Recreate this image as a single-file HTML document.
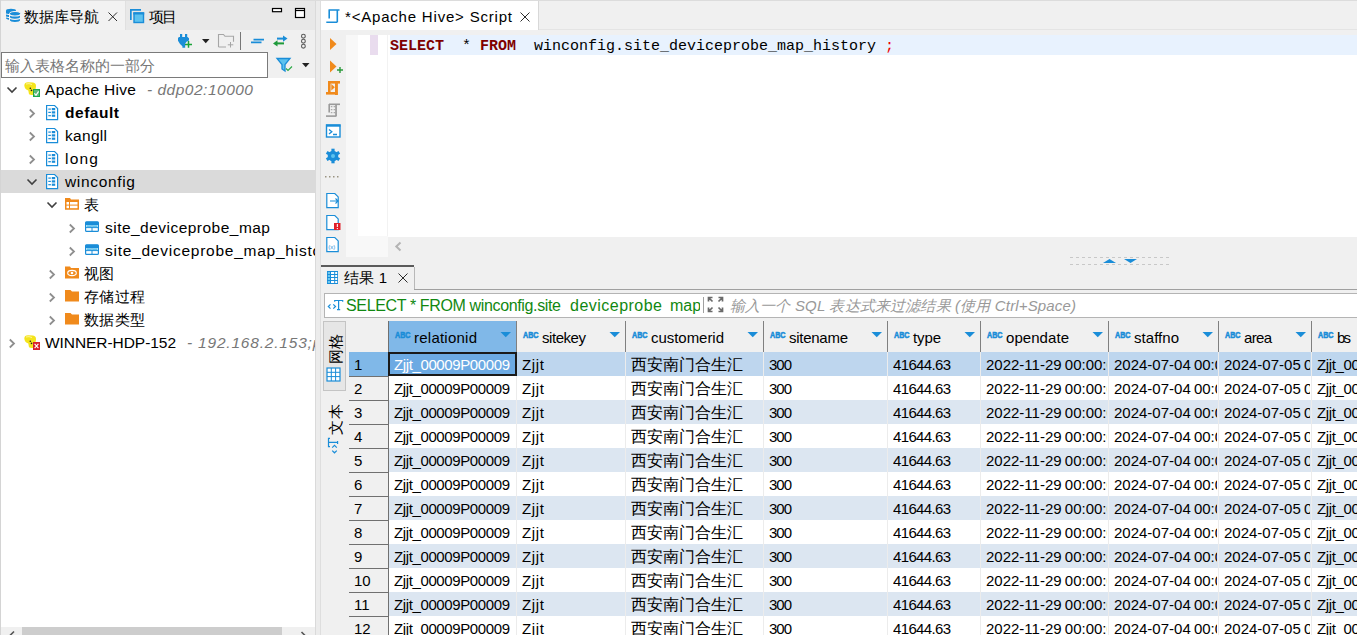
<!DOCTYPE html>
<html><head><meta charset="utf-8"><style>
html,body{margin:0;padding:0;}
body{width:1357px;height:635px;position:relative;overflow:hidden;background:#f0f0f0;font-family:'Liberation Sans', sans-serif;}
</style></head><body>
<div style="position:absolute;left:0px;top:0px;width:1357px;height:1px;background:#dcdcdc;"></div>
<div style="position:absolute;left:0px;top:0px;width:1px;height:635px;background:#d4d4d4;"></div>
<div style="position:absolute;left:1px;top:1px;width:315px;height:29px;background:#e8e8e8;"></div>
<div style="position:absolute;left:1px;top:1px;width:124px;height:29px;background:#f2f2f2;"></div>
<div style="position:absolute;left:125px;top:1px;width:1px;height:29px;background:#e0e0e0;"></div>
<div style="position:absolute;left:1px;top:30px;width:314px;height:48px;background:#f0f0f0;"></div>
<div style="position:absolute;left:315px;top:1px;width:1px;height:634px;background:#dadada;"></div>
<div style="position:absolute;left:316px;top:1px;width:4px;height:634px;background:#ececec;"></div>
<div style="position:absolute;left:320px;top:1px;width:1px;height:634px;background:#dedede;"></div>
<div style="position:absolute;left:1px;top:78px;width:314px;height:549px;background:#ffffff;"></div>
<div style="position:absolute;left:1px;top:627px;width:314px;height:8px;background:#f0f0f0;"></div>
<div style="position:absolute;left:22px;top:627px;width:260px;height:8px;background:#cdcdcd;"></div>
<div style="position:absolute;left:1px;top:52px;width:267px;height:26px;background:#ffffff;border:1px solid #7a7a7a;box-sizing:border-box;"></div>
<div style="position:absolute;left:1px;top:170px;width:314px;height:23px;background:#dadada;"></div>
<div style="position:absolute;left:321px;top:1px;width:1036px;height:29px;background:#f0f0f0;"></div>
<div style="position:absolute;left:321px;top:29px;width:1036px;height:1px;background:#e4e4e4;"></div>
<div style="position:absolute;left:321px;top:1px;width:217px;height:29px;background:#ffffff;"></div>
<div style="position:absolute;left:538px;top:1px;width:1px;height:29px;background:#d8d8d8;"></div>
<div style="position:absolute;left:321px;top:30px;width:1036px;height:5px;background:#f0f0f0;"></div>
<div style="position:absolute;left:321px;top:35px;width:25px;height:222px;background:#f0f0f0;"></div>
<div style="position:absolute;left:346px;top:35px;width:12px;height:222px;background:#f8f8f8;"></div>
<div style="position:absolute;left:358px;top:35px;width:30px;height:201px;background:#ffffff;"></div>
<div style="position:absolute;left:358px;top:236px;width:30px;height:21px;background:#f8f8f8;"></div>
<div style="position:absolute;left:387px;top:35px;width:1px;height:201px;background:#f2f2f2;"></div>
<div style="position:absolute;left:388px;top:35px;width:969px;height:202px;background:#ffffff;"></div>
<div style="position:absolute;left:388px;top:237px;width:969px;height:20px;background:#f0f0f0;"></div>
<div style="position:absolute;left:370px;top:35px;width:8px;height:20px;background:#e9dcee;"></div>
<div style="position:absolute;left:390px;top:35px;width:967px;height:20px;background:#e8f2fe;"></div>
<div style="position:absolute;left:321px;top:257px;width:1036px;height:8px;background:#f0f0f0;"></div>
<div style="position:absolute;left:321px;top:265px;width:1036px;height:370px;background:#f0f0f0;"></div>
<div style="position:absolute;left:321px;top:265px;width:93px;height:2px;background:#5a5a5a;"></div>
<div style="position:absolute;left:414px;top:267px;width:1px;height:23px;background:#b8b8b8;"></div>
<div style="position:absolute;left:414px;top:289px;width:943px;height:1px;background:#a0a0a0;"></div>
<div style="position:absolute;left:324px;top:293px;width:1033px;height:25px;background:#ffffff;border:1px solid #b4b4b4;border-right:none;box-sizing:border-box;"></div>
<div style="position:absolute;left:700px;top:294px;width:30px;height:23px;background:#ffffff;"></div>
<div style="position:absolute;left:703px;top:297px;width:1px;height:16px;background:#a0a0a0;"></div>
<div style="position:absolute;left:323px;top:321px;width:23px;height:70px;background:#e6e6e6;border:1px solid #c4c4c4;box-sizing:border-box;"></div>
<div style="position:absolute;left:349px;top:321px;width:39px;height:31px;background:#f0f0f0;"></div>
<div style="position:absolute;left:388px;top:321px;width:969px;height:31px;background:#f0f0f0;"></div>
<div style="position:absolute;left:388px;top:321px;width:128px;height:31px;background:#80b8e8;"></div>
<div style="position:absolute;left:349px;top:352px;width:1008px;height:1px;background:#5a5a5a;"></div>
<div style="position:absolute;left:388px;top:352px;width:969px;height:24px;background:#bed6ee;"></div>
<div style="position:absolute;left:349px;top:352px;width:39px;height:24px;background:#80b8e8;"></div>
<div style="position:absolute;left:388px;top:376px;width:969px;height:24px;background:#ffffff;"></div>
<div style="position:absolute;left:349px;top:376px;width:39px;height:24px;background:#f0f0f0;"></div>
<div style="position:absolute;left:349px;top:376px;width:39px;height:1px;background:#707070;"></div>
<div style="position:absolute;left:388px;top:400px;width:969px;height:24px;background:#dce6f1;"></div>
<div style="position:absolute;left:349px;top:400px;width:39px;height:24px;background:#f0f0f0;"></div>
<div style="position:absolute;left:349px;top:400px;width:39px;height:1px;background:#707070;"></div>
<div style="position:absolute;left:388px;top:424px;width:969px;height:24px;background:#ffffff;"></div>
<div style="position:absolute;left:349px;top:424px;width:39px;height:24px;background:#f0f0f0;"></div>
<div style="position:absolute;left:349px;top:424px;width:39px;height:1px;background:#707070;"></div>
<div style="position:absolute;left:388px;top:448px;width:969px;height:24px;background:#dce6f1;"></div>
<div style="position:absolute;left:349px;top:448px;width:39px;height:24px;background:#f0f0f0;"></div>
<div style="position:absolute;left:349px;top:448px;width:39px;height:1px;background:#707070;"></div>
<div style="position:absolute;left:388px;top:472px;width:969px;height:24px;background:#ffffff;"></div>
<div style="position:absolute;left:349px;top:472px;width:39px;height:24px;background:#f0f0f0;"></div>
<div style="position:absolute;left:349px;top:472px;width:39px;height:1px;background:#707070;"></div>
<div style="position:absolute;left:388px;top:496px;width:969px;height:24px;background:#dce6f1;"></div>
<div style="position:absolute;left:349px;top:496px;width:39px;height:24px;background:#f0f0f0;"></div>
<div style="position:absolute;left:349px;top:496px;width:39px;height:1px;background:#707070;"></div>
<div style="position:absolute;left:388px;top:520px;width:969px;height:24px;background:#ffffff;"></div>
<div style="position:absolute;left:349px;top:520px;width:39px;height:24px;background:#f0f0f0;"></div>
<div style="position:absolute;left:349px;top:520px;width:39px;height:1px;background:#707070;"></div>
<div style="position:absolute;left:388px;top:544px;width:969px;height:24px;background:#dce6f1;"></div>
<div style="position:absolute;left:349px;top:544px;width:39px;height:24px;background:#f0f0f0;"></div>
<div style="position:absolute;left:349px;top:544px;width:39px;height:1px;background:#707070;"></div>
<div style="position:absolute;left:388px;top:568px;width:969px;height:24px;background:#ffffff;"></div>
<div style="position:absolute;left:349px;top:568px;width:39px;height:24px;background:#f0f0f0;"></div>
<div style="position:absolute;left:349px;top:568px;width:39px;height:1px;background:#707070;"></div>
<div style="position:absolute;left:388px;top:592px;width:969px;height:24px;background:#dce6f1;"></div>
<div style="position:absolute;left:349px;top:592px;width:39px;height:24px;background:#f0f0f0;"></div>
<div style="position:absolute;left:349px;top:592px;width:39px;height:1px;background:#707070;"></div>
<div style="position:absolute;left:388px;top:616px;width:969px;height:24px;background:#ffffff;"></div>
<div style="position:absolute;left:349px;top:616px;width:39px;height:24px;background:#f0f0f0;"></div>
<div style="position:absolute;left:349px;top:616px;width:39px;height:1px;background:#707070;"></div>
<div style="position:absolute;left:388px;top:321px;width:1px;height:31px;background:#808080;"></div>
<div style="position:absolute;left:388px;top:352px;width:1px;height:283px;background:#ececec;"></div>
<div style="position:absolute;left:516px;top:321px;width:1px;height:31px;background:#808080;"></div>
<div style="position:absolute;left:516px;top:352px;width:1px;height:283px;background:#ececec;"></div>
<div style="position:absolute;left:625px;top:321px;width:1px;height:31px;background:#808080;"></div>
<div style="position:absolute;left:625px;top:352px;width:1px;height:283px;background:#ececec;"></div>
<div style="position:absolute;left:763px;top:321px;width:1px;height:31px;background:#808080;"></div>
<div style="position:absolute;left:763px;top:352px;width:1px;height:283px;background:#ececec;"></div>
<div style="position:absolute;left:887px;top:321px;width:1px;height:31px;background:#808080;"></div>
<div style="position:absolute;left:887px;top:352px;width:1px;height:283px;background:#ececec;"></div>
<div style="position:absolute;left:980px;top:321px;width:1px;height:31px;background:#808080;"></div>
<div style="position:absolute;left:980px;top:352px;width:1px;height:283px;background:#ececec;"></div>
<div style="position:absolute;left:1108px;top:321px;width:1px;height:31px;background:#808080;"></div>
<div style="position:absolute;left:1108px;top:352px;width:1px;height:283px;background:#ececec;"></div>
<div style="position:absolute;left:1218px;top:321px;width:1px;height:31px;background:#808080;"></div>
<div style="position:absolute;left:1218px;top:352px;width:1px;height:283px;background:#ececec;"></div>
<div style="position:absolute;left:1311px;top:321px;width:1px;height:31px;background:#808080;"></div>
<div style="position:absolute;left:1311px;top:352px;width:1px;height:283px;background:#ececec;"></div>
<div style="position:absolute;left:388px;top:321px;width:1px;height:314px;background:#707070;"></div>
<div style="position:absolute;left:388px;top:352px;width:129px;height:24px;background:#6caae3;border:2px solid #1a1a1a;box-sizing:border-box;"></div>
<div style="position:absolute;left:24px;top:2px;height:29px;line-height:29px;font-family:'Liberation Sans', sans-serif;font-size:15px;color:#000;font-weight:normal;font-style:normal;white-space:pre;letter-spacing:0.000px;">数据库导航</div>
<div style="position:absolute;left:149px;top:2px;height:29px;line-height:29px;font-family:'Liberation Sans', sans-serif;font-size:15px;color:#000;font-weight:normal;font-style:normal;white-space:pre;letter-spacing:-2.000px;">项目</div>
<div style="position:absolute;left:5px;top:53px;height:26px;line-height:26px;font-family:'Liberation Sans', sans-serif;font-size:15px;color:#777;font-weight:normal;font-style:normal;white-space:pre;letter-spacing:0.000px;">输入表格名称的一部分</div>
<div style="position:absolute;left:45px;top:78px;height:23px;line-height:23px;font-family:'Liberation Sans', sans-serif;font-size:15.5px;color:#000;font-weight:normal;font-style:normal;white-space:pre;letter-spacing:0.311px;">Apache Hive</div>
<div style="position:absolute;left:147px;top:78px;height:23px;line-height:23px;font-family:'Liberation Sans', sans-serif;font-size:15.5px;color:#777;font-weight:normal;font-style:italic;white-space:pre;letter-spacing:0.501px;">- ddp02:10000</div>
<div style="position:absolute;left:65px;top:101px;height:23px;line-height:23px;font-family:'Liberation Sans', sans-serif;font-size:15.5px;color:#000;font-weight:bold;font-style:normal;white-space:pre;letter-spacing:0.531px;">default</div>
<div style="position:absolute;left:65px;top:124px;height:23px;line-height:23px;font-family:'Liberation Sans', sans-serif;font-size:15.5px;color:#000;font-weight:normal;font-style:normal;white-space:pre;letter-spacing:0.300px;">kangll</div>
<div style="position:absolute;left:65px;top:147px;height:23px;line-height:23px;font-family:'Liberation Sans', sans-serif;font-size:15.5px;color:#000;font-weight:normal;font-style:normal;white-space:pre;letter-spacing:1.229px;">long</div>
<div style="position:absolute;left:65px;top:170px;height:23px;line-height:23px;font-family:'Liberation Sans', sans-serif;font-size:15.5px;color:#000;font-weight:normal;font-style:normal;white-space:pre;letter-spacing:0.672px;">winconfig</div>
<div style="position:absolute;left:84px;top:193px;height:23px;line-height:23px;font-family:'Liberation Sans', sans-serif;font-size:15px;color:#000;font-weight:normal;font-style:normal;white-space:pre;letter-spacing:0.000px;">表</div>
<div style="position:absolute;left:105px;top:216px;height:23px;line-height:23px;font-family:'Liberation Sans', sans-serif;font-size:15.5px;color:#000;font-weight:normal;font-style:normal;white-space:pre;letter-spacing:0.475px;">site_deviceprobe_map</div>
<div style="position:absolute;left:105px;top:239px;height:23px;line-height:23px;font-family:'Liberation Sans', sans-serif;font-size:15.5px;color:#000;font-weight:normal;font-style:normal;white-space:pre;letter-spacing:0.75px;width:210px;overflow:hidden;">site_deviceprobe_map_history</div>
<div style="position:absolute;left:84px;top:262px;height:23px;line-height:23px;font-family:'Liberation Sans', sans-serif;font-size:15px;color:#000;font-weight:normal;font-style:normal;white-space:pre;letter-spacing:0.000px;">视图</div>
<div style="position:absolute;left:84px;top:285px;height:23px;line-height:23px;font-family:'Liberation Sans', sans-serif;font-size:15px;color:#000;font-weight:normal;font-style:normal;white-space:pre;letter-spacing:0.333px;">存储过程</div>
<div style="position:absolute;left:84px;top:308px;height:23px;line-height:23px;font-family:'Liberation Sans', sans-serif;font-size:15px;color:#000;font-weight:normal;font-style:normal;white-space:pre;letter-spacing:0.333px;">数据类型</div>
<div style="position:absolute;left:45px;top:331px;height:23px;line-height:23px;font-family:'Liberation Sans', sans-serif;font-size:15.5px;color:#000;font-weight:normal;font-style:normal;white-space:pre;letter-spacing:-0.059px;">WINNER-HDP-152</div>
<div style="position:absolute;left:187px;top:331px;height:23px;line-height:23px;font-family:'Liberation Sans', sans-serif;font-size:15.5px;color:#777;font-weight:normal;font-style:italic;white-space:pre;letter-spacing:0.8px;width:128px;overflow:hidden;">- 192.168.2.153;pr</div>
<div style="position:absolute;left:345px;top:2px;height:29px;line-height:29px;font-family:'Liberation Sans', sans-serif;font-size:15px;color:#000;font-weight:normal;font-style:normal;white-space:pre;letter-spacing:0.804px;">*&lt;Apache Hive&gt; Script</div>
<div style="position:absolute;left:390px;top:37px;height:20px;line-height:20px;font-family:'Liberation Mono', monospace;font-size:15px;color:#000;font-weight:normal;font-style:normal;white-space:pre;"><span style="color:#7f0000;font-weight:bold">SELECT</span>  * <span style="color:#7f0000;font-weight:bold">FROM</span>  winconfig.site_deviceprobe_map_history <span style="color:#e00">;</span></div>
<div style="position:absolute;left:344px;top:267px;height:22px;line-height:22px;font-family:'Liberation Sans', sans-serif;font-size:15px;color:#000;font-weight:normal;font-style:normal;white-space:pre;letter-spacing:0.161px;">结果 1</div>
<div style="position:absolute;left:346px;top:293px;height:25px;line-height:25px;font-family:'Liberation Sans', sans-serif;font-size:16px;color:#118811;font-weight:normal;font-style:normal;white-space:pre;letter-spacing:-0.358px;">SELECT * FROM winconfig.site</div>
<div style="position:absolute;left:570px;top:293px;height:25px;line-height:25px;font-family:'Liberation Sans', sans-serif;font-size:16px;color:#118811;font-weight:normal;font-style:normal;white-space:pre;letter-spacing:0.483px;">deviceprobe</div>
<div style="position:absolute;left:670px;top:293px;height:25px;line-height:25px;font-family:'Liberation Sans', sans-serif;font-size:16px;color:#118811;font-weight:normal;font-style:normal;white-space:pre;width:30px;overflow:hidden;">map</div>
<div style="position:absolute;left:730px;top:293px;height:25px;line-height:25px;font-family:'Liberation Sans', sans-serif;font-size:15px;color:#999;font-weight:normal;font-style:italic;white-space:pre;letter-spacing:0.155px;">输入一个 SQL 表达式来过滤结果 (使用 Ctrl+Space)</div>
<div style="position:absolute;left:324px;top:364px;height:23px;line-height:23px;font-family:'Liberation Sans', sans-serif;font-size:15px;color:#000;font-weight:normal;font-style:normal;white-space:pre;transform:rotate(-90deg);transform-origin:0 0;">网格</div>
<div style="position:absolute;left:324px;top:435px;height:23px;line-height:23px;font-family:'Liberation Sans', sans-serif;font-size:15px;color:#000;font-weight:normal;font-style:normal;white-space:pre;letter-spacing:1.000px;transform:rotate(-90deg);transform-origin:0 0;">文本</div>
<div style="position:absolute;left:414px;top:322px;height:31px;line-height:31px;font-family:'Liberation Sans', sans-serif;font-size:15px;color:#000;font-weight:normal;font-style:normal;white-space:pre;letter-spacing:0.236px;">relationid</div>
<div style="position:absolute;left:394px;top:353px;height:24px;line-height:24px;font-family:'Liberation Sans', sans-serif;font-size:15px;color:#fff;font-weight:normal;font-style:normal;white-space:pre;letter-spacing:-0.384px;width:121px;overflow:hidden;">Zjjt_00009P00009</div>
<div style="position:absolute;left:394px;top:377px;height:24px;line-height:24px;font-family:'Liberation Sans', sans-serif;font-size:15px;color:#000;font-weight:normal;font-style:normal;white-space:pre;letter-spacing:-0.384px;width:121px;overflow:hidden;">Zjjt_00009P00009</div>
<div style="position:absolute;left:394px;top:401px;height:24px;line-height:24px;font-family:'Liberation Sans', sans-serif;font-size:15px;color:#000;font-weight:normal;font-style:normal;white-space:pre;letter-spacing:-0.384px;width:121px;overflow:hidden;">Zjjt_00009P00009</div>
<div style="position:absolute;left:394px;top:425px;height:24px;line-height:24px;font-family:'Liberation Sans', sans-serif;font-size:15px;color:#000;font-weight:normal;font-style:normal;white-space:pre;letter-spacing:-0.384px;width:121px;overflow:hidden;">Zjjt_00009P00009</div>
<div style="position:absolute;left:394px;top:449px;height:24px;line-height:24px;font-family:'Liberation Sans', sans-serif;font-size:15px;color:#000;font-weight:normal;font-style:normal;white-space:pre;letter-spacing:-0.384px;width:121px;overflow:hidden;">Zjjt_00009P00009</div>
<div style="position:absolute;left:394px;top:473px;height:24px;line-height:24px;font-family:'Liberation Sans', sans-serif;font-size:15px;color:#000;font-weight:normal;font-style:normal;white-space:pre;letter-spacing:-0.384px;width:121px;overflow:hidden;">Zjjt_00009P00009</div>
<div style="position:absolute;left:394px;top:497px;height:24px;line-height:24px;font-family:'Liberation Sans', sans-serif;font-size:15px;color:#000;font-weight:normal;font-style:normal;white-space:pre;letter-spacing:-0.384px;width:121px;overflow:hidden;">Zjjt_00009P00009</div>
<div style="position:absolute;left:394px;top:521px;height:24px;line-height:24px;font-family:'Liberation Sans', sans-serif;font-size:15px;color:#000;font-weight:normal;font-style:normal;white-space:pre;letter-spacing:-0.384px;width:121px;overflow:hidden;">Zjjt_00009P00009</div>
<div style="position:absolute;left:394px;top:545px;height:24px;line-height:24px;font-family:'Liberation Sans', sans-serif;font-size:15px;color:#000;font-weight:normal;font-style:normal;white-space:pre;letter-spacing:-0.384px;width:121px;overflow:hidden;">Zjjt_00009P00009</div>
<div style="position:absolute;left:394px;top:569px;height:24px;line-height:24px;font-family:'Liberation Sans', sans-serif;font-size:15px;color:#000;font-weight:normal;font-style:normal;white-space:pre;letter-spacing:-0.384px;width:121px;overflow:hidden;">Zjjt_00009P00009</div>
<div style="position:absolute;left:394px;top:593px;height:24px;line-height:24px;font-family:'Liberation Sans', sans-serif;font-size:15px;color:#000;font-weight:normal;font-style:normal;white-space:pre;letter-spacing:-0.384px;width:121px;overflow:hidden;">Zjjt_00009P00009</div>
<div style="position:absolute;left:394px;top:617px;height:24px;line-height:24px;font-family:'Liberation Sans', sans-serif;font-size:15px;color:#000;font-weight:normal;font-style:normal;white-space:pre;letter-spacing:-0.384px;width:121px;overflow:hidden;">Zjjt_00009P00009</div>
<div style="position:absolute;left:542px;top:322px;height:31px;line-height:31px;font-family:'Liberation Sans', sans-serif;font-size:15px;color:#000;font-weight:normal;font-style:normal;white-space:pre;letter-spacing:-0.448px;">sitekey</div>
<div style="position:absolute;left:522px;top:353px;height:24px;line-height:24px;font-family:'Liberation Sans', sans-serif;font-size:15px;color:#000;font-weight:normal;font-style:normal;white-space:pre;letter-spacing:0.667px;width:102px;overflow:hidden;">Zjjt</div>
<div style="position:absolute;left:522px;top:377px;height:24px;line-height:24px;font-family:'Liberation Sans', sans-serif;font-size:15px;color:#000;font-weight:normal;font-style:normal;white-space:pre;letter-spacing:0.667px;width:102px;overflow:hidden;">Zjjt</div>
<div style="position:absolute;left:522px;top:401px;height:24px;line-height:24px;font-family:'Liberation Sans', sans-serif;font-size:15px;color:#000;font-weight:normal;font-style:normal;white-space:pre;letter-spacing:0.667px;width:102px;overflow:hidden;">Zjjt</div>
<div style="position:absolute;left:522px;top:425px;height:24px;line-height:24px;font-family:'Liberation Sans', sans-serif;font-size:15px;color:#000;font-weight:normal;font-style:normal;white-space:pre;letter-spacing:0.667px;width:102px;overflow:hidden;">Zjjt</div>
<div style="position:absolute;left:522px;top:449px;height:24px;line-height:24px;font-family:'Liberation Sans', sans-serif;font-size:15px;color:#000;font-weight:normal;font-style:normal;white-space:pre;letter-spacing:0.667px;width:102px;overflow:hidden;">Zjjt</div>
<div style="position:absolute;left:522px;top:473px;height:24px;line-height:24px;font-family:'Liberation Sans', sans-serif;font-size:15px;color:#000;font-weight:normal;font-style:normal;white-space:pre;letter-spacing:0.667px;width:102px;overflow:hidden;">Zjjt</div>
<div style="position:absolute;left:522px;top:497px;height:24px;line-height:24px;font-family:'Liberation Sans', sans-serif;font-size:15px;color:#000;font-weight:normal;font-style:normal;white-space:pre;letter-spacing:0.667px;width:102px;overflow:hidden;">Zjjt</div>
<div style="position:absolute;left:522px;top:521px;height:24px;line-height:24px;font-family:'Liberation Sans', sans-serif;font-size:15px;color:#000;font-weight:normal;font-style:normal;white-space:pre;letter-spacing:0.667px;width:102px;overflow:hidden;">Zjjt</div>
<div style="position:absolute;left:522px;top:545px;height:24px;line-height:24px;font-family:'Liberation Sans', sans-serif;font-size:15px;color:#000;font-weight:normal;font-style:normal;white-space:pre;letter-spacing:0.667px;width:102px;overflow:hidden;">Zjjt</div>
<div style="position:absolute;left:522px;top:569px;height:24px;line-height:24px;font-family:'Liberation Sans', sans-serif;font-size:15px;color:#000;font-weight:normal;font-style:normal;white-space:pre;letter-spacing:0.667px;width:102px;overflow:hidden;">Zjjt</div>
<div style="position:absolute;left:522px;top:593px;height:24px;line-height:24px;font-family:'Liberation Sans', sans-serif;font-size:15px;color:#000;font-weight:normal;font-style:normal;white-space:pre;letter-spacing:0.667px;width:102px;overflow:hidden;">Zjjt</div>
<div style="position:absolute;left:522px;top:617px;height:24px;line-height:24px;font-family:'Liberation Sans', sans-serif;font-size:15px;color:#000;font-weight:normal;font-style:normal;white-space:pre;letter-spacing:0.667px;width:102px;overflow:hidden;">Zjjt</div>
<div style="position:absolute;left:651px;top:322px;height:31px;line-height:31px;font-family:'Liberation Sans', sans-serif;font-size:15px;color:#000;font-weight:normal;font-style:normal;white-space:pre;letter-spacing:-0.040px;">customerid</div>
<div style="position:absolute;left:631px;top:353px;height:24px;line-height:24px;font-family:'Liberation Sans', sans-serif;font-size:16px;color:#000;font-weight:normal;font-style:normal;white-space:pre;width:131px;overflow:hidden;">西安南门合生汇</div>
<div style="position:absolute;left:631px;top:377px;height:24px;line-height:24px;font-family:'Liberation Sans', sans-serif;font-size:16px;color:#000;font-weight:normal;font-style:normal;white-space:pre;width:131px;overflow:hidden;">西安南门合生汇</div>
<div style="position:absolute;left:631px;top:401px;height:24px;line-height:24px;font-family:'Liberation Sans', sans-serif;font-size:16px;color:#000;font-weight:normal;font-style:normal;white-space:pre;width:131px;overflow:hidden;">西安南门合生汇</div>
<div style="position:absolute;left:631px;top:425px;height:24px;line-height:24px;font-family:'Liberation Sans', sans-serif;font-size:16px;color:#000;font-weight:normal;font-style:normal;white-space:pre;width:131px;overflow:hidden;">西安南门合生汇</div>
<div style="position:absolute;left:631px;top:449px;height:24px;line-height:24px;font-family:'Liberation Sans', sans-serif;font-size:16px;color:#000;font-weight:normal;font-style:normal;white-space:pre;width:131px;overflow:hidden;">西安南门合生汇</div>
<div style="position:absolute;left:631px;top:473px;height:24px;line-height:24px;font-family:'Liberation Sans', sans-serif;font-size:16px;color:#000;font-weight:normal;font-style:normal;white-space:pre;width:131px;overflow:hidden;">西安南门合生汇</div>
<div style="position:absolute;left:631px;top:497px;height:24px;line-height:24px;font-family:'Liberation Sans', sans-serif;font-size:16px;color:#000;font-weight:normal;font-style:normal;white-space:pre;width:131px;overflow:hidden;">西安南门合生汇</div>
<div style="position:absolute;left:631px;top:521px;height:24px;line-height:24px;font-family:'Liberation Sans', sans-serif;font-size:16px;color:#000;font-weight:normal;font-style:normal;white-space:pre;width:131px;overflow:hidden;">西安南门合生汇</div>
<div style="position:absolute;left:631px;top:545px;height:24px;line-height:24px;font-family:'Liberation Sans', sans-serif;font-size:16px;color:#000;font-weight:normal;font-style:normal;white-space:pre;width:131px;overflow:hidden;">西安南门合生汇</div>
<div style="position:absolute;left:631px;top:569px;height:24px;line-height:24px;font-family:'Liberation Sans', sans-serif;font-size:16px;color:#000;font-weight:normal;font-style:normal;white-space:pre;width:131px;overflow:hidden;">西安南门合生汇</div>
<div style="position:absolute;left:631px;top:593px;height:24px;line-height:24px;font-family:'Liberation Sans', sans-serif;font-size:16px;color:#000;font-weight:normal;font-style:normal;white-space:pre;width:131px;overflow:hidden;">西安南门合生汇</div>
<div style="position:absolute;left:631px;top:617px;height:24px;line-height:24px;font-family:'Liberation Sans', sans-serif;font-size:16px;color:#000;font-weight:normal;font-style:normal;white-space:pre;width:131px;overflow:hidden;">西安南门合生汇</div>
<div style="position:absolute;left:789px;top:322px;height:31px;line-height:31px;font-family:'Liberation Sans', sans-serif;font-size:15px;color:#000;font-weight:normal;font-style:normal;white-space:pre;letter-spacing:-0.268px;">sitename</div>
<div style="position:absolute;left:769px;top:353px;height:24px;line-height:24px;font-family:'Liberation Sans', sans-serif;font-size:15px;color:#000;font-weight:normal;font-style:normal;white-space:pre;letter-spacing:-1.016px;width:117px;overflow:hidden;">300</div>
<div style="position:absolute;left:769px;top:377px;height:24px;line-height:24px;font-family:'Liberation Sans', sans-serif;font-size:15px;color:#000;font-weight:normal;font-style:normal;white-space:pre;letter-spacing:-1.016px;width:117px;overflow:hidden;">300</div>
<div style="position:absolute;left:769px;top:401px;height:24px;line-height:24px;font-family:'Liberation Sans', sans-serif;font-size:15px;color:#000;font-weight:normal;font-style:normal;white-space:pre;letter-spacing:-1.016px;width:117px;overflow:hidden;">300</div>
<div style="position:absolute;left:769px;top:425px;height:24px;line-height:24px;font-family:'Liberation Sans', sans-serif;font-size:15px;color:#000;font-weight:normal;font-style:normal;white-space:pre;letter-spacing:-1.016px;width:117px;overflow:hidden;">300</div>
<div style="position:absolute;left:769px;top:449px;height:24px;line-height:24px;font-family:'Liberation Sans', sans-serif;font-size:15px;color:#000;font-weight:normal;font-style:normal;white-space:pre;letter-spacing:-1.016px;width:117px;overflow:hidden;">300</div>
<div style="position:absolute;left:769px;top:473px;height:24px;line-height:24px;font-family:'Liberation Sans', sans-serif;font-size:15px;color:#000;font-weight:normal;font-style:normal;white-space:pre;letter-spacing:-1.016px;width:117px;overflow:hidden;">300</div>
<div style="position:absolute;left:769px;top:497px;height:24px;line-height:24px;font-family:'Liberation Sans', sans-serif;font-size:15px;color:#000;font-weight:normal;font-style:normal;white-space:pre;letter-spacing:-1.016px;width:117px;overflow:hidden;">300</div>
<div style="position:absolute;left:769px;top:521px;height:24px;line-height:24px;font-family:'Liberation Sans', sans-serif;font-size:15px;color:#000;font-weight:normal;font-style:normal;white-space:pre;letter-spacing:-1.016px;width:117px;overflow:hidden;">300</div>
<div style="position:absolute;left:769px;top:545px;height:24px;line-height:24px;font-family:'Liberation Sans', sans-serif;font-size:15px;color:#000;font-weight:normal;font-style:normal;white-space:pre;letter-spacing:-1.016px;width:117px;overflow:hidden;">300</div>
<div style="position:absolute;left:769px;top:569px;height:24px;line-height:24px;font-family:'Liberation Sans', sans-serif;font-size:15px;color:#000;font-weight:normal;font-style:normal;white-space:pre;letter-spacing:-1.016px;width:117px;overflow:hidden;">300</div>
<div style="position:absolute;left:769px;top:593px;height:24px;line-height:24px;font-family:'Liberation Sans', sans-serif;font-size:15px;color:#000;font-weight:normal;font-style:normal;white-space:pre;letter-spacing:-1.016px;width:117px;overflow:hidden;">300</div>
<div style="position:absolute;left:769px;top:617px;height:24px;line-height:24px;font-family:'Liberation Sans', sans-serif;font-size:15px;color:#000;font-weight:normal;font-style:normal;white-space:pre;letter-spacing:-1.016px;width:117px;overflow:hidden;">300</div>
<div style="position:absolute;left:913px;top:322px;height:31px;line-height:31px;font-family:'Liberation Sans', sans-serif;font-size:15px;color:#000;font-weight:normal;font-style:normal;white-space:pre;letter-spacing:-0.120px;">type</div>
<div style="position:absolute;left:893px;top:353px;height:24px;line-height:24px;font-family:'Liberation Sans', sans-serif;font-size:15px;color:#000;font-weight:normal;font-style:normal;white-space:pre;letter-spacing:-0.654px;width:86px;overflow:hidden;">41644.63</div>
<div style="position:absolute;left:893px;top:377px;height:24px;line-height:24px;font-family:'Liberation Sans', sans-serif;font-size:15px;color:#000;font-weight:normal;font-style:normal;white-space:pre;letter-spacing:-0.654px;width:86px;overflow:hidden;">41644.63</div>
<div style="position:absolute;left:893px;top:401px;height:24px;line-height:24px;font-family:'Liberation Sans', sans-serif;font-size:15px;color:#000;font-weight:normal;font-style:normal;white-space:pre;letter-spacing:-0.654px;width:86px;overflow:hidden;">41644.63</div>
<div style="position:absolute;left:893px;top:425px;height:24px;line-height:24px;font-family:'Liberation Sans', sans-serif;font-size:15px;color:#000;font-weight:normal;font-style:normal;white-space:pre;letter-spacing:-0.654px;width:86px;overflow:hidden;">41644.63</div>
<div style="position:absolute;left:893px;top:449px;height:24px;line-height:24px;font-family:'Liberation Sans', sans-serif;font-size:15px;color:#000;font-weight:normal;font-style:normal;white-space:pre;letter-spacing:-0.654px;width:86px;overflow:hidden;">41644.63</div>
<div style="position:absolute;left:893px;top:473px;height:24px;line-height:24px;font-family:'Liberation Sans', sans-serif;font-size:15px;color:#000;font-weight:normal;font-style:normal;white-space:pre;letter-spacing:-0.654px;width:86px;overflow:hidden;">41644.63</div>
<div style="position:absolute;left:893px;top:497px;height:24px;line-height:24px;font-family:'Liberation Sans', sans-serif;font-size:15px;color:#000;font-weight:normal;font-style:normal;white-space:pre;letter-spacing:-0.654px;width:86px;overflow:hidden;">41644.63</div>
<div style="position:absolute;left:893px;top:521px;height:24px;line-height:24px;font-family:'Liberation Sans', sans-serif;font-size:15px;color:#000;font-weight:normal;font-style:normal;white-space:pre;letter-spacing:-0.654px;width:86px;overflow:hidden;">41644.63</div>
<div style="position:absolute;left:893px;top:545px;height:24px;line-height:24px;font-family:'Liberation Sans', sans-serif;font-size:15px;color:#000;font-weight:normal;font-style:normal;white-space:pre;letter-spacing:-0.654px;width:86px;overflow:hidden;">41644.63</div>
<div style="position:absolute;left:893px;top:569px;height:24px;line-height:24px;font-family:'Liberation Sans', sans-serif;font-size:15px;color:#000;font-weight:normal;font-style:normal;white-space:pre;letter-spacing:-0.654px;width:86px;overflow:hidden;">41644.63</div>
<div style="position:absolute;left:893px;top:593px;height:24px;line-height:24px;font-family:'Liberation Sans', sans-serif;font-size:15px;color:#000;font-weight:normal;font-style:normal;white-space:pre;letter-spacing:-0.654px;width:86px;overflow:hidden;">41644.63</div>
<div style="position:absolute;left:893px;top:617px;height:24px;line-height:24px;font-family:'Liberation Sans', sans-serif;font-size:15px;color:#000;font-weight:normal;font-style:normal;white-space:pre;letter-spacing:-0.654px;width:86px;overflow:hidden;">41644.63</div>
<div style="position:absolute;left:1006px;top:322px;height:31px;line-height:31px;font-family:'Liberation Sans', sans-serif;font-size:15px;color:#000;font-weight:normal;font-style:normal;white-space:pre;letter-spacing:0.060px;">opendate</div>
<div style="position:absolute;left:986px;top:353px;height:24px;line-height:24px;font-family:'Liberation Sans', sans-serif;font-size:15px;color:#000;font-weight:normal;font-style:normal;white-space:pre;word-spacing:-1px;width:121px;overflow:hidden;">2022-11-29 00:00:00</div>
<div style="position:absolute;left:986px;top:377px;height:24px;line-height:24px;font-family:'Liberation Sans', sans-serif;font-size:15px;color:#000;font-weight:normal;font-style:normal;white-space:pre;word-spacing:-1px;width:121px;overflow:hidden;">2022-11-29 00:00:00</div>
<div style="position:absolute;left:986px;top:401px;height:24px;line-height:24px;font-family:'Liberation Sans', sans-serif;font-size:15px;color:#000;font-weight:normal;font-style:normal;white-space:pre;word-spacing:-1px;width:121px;overflow:hidden;">2022-11-29 00:00:00</div>
<div style="position:absolute;left:986px;top:425px;height:24px;line-height:24px;font-family:'Liberation Sans', sans-serif;font-size:15px;color:#000;font-weight:normal;font-style:normal;white-space:pre;word-spacing:-1px;width:121px;overflow:hidden;">2022-11-29 00:00:00</div>
<div style="position:absolute;left:986px;top:449px;height:24px;line-height:24px;font-family:'Liberation Sans', sans-serif;font-size:15px;color:#000;font-weight:normal;font-style:normal;white-space:pre;word-spacing:-1px;width:121px;overflow:hidden;">2022-11-29 00:00:00</div>
<div style="position:absolute;left:986px;top:473px;height:24px;line-height:24px;font-family:'Liberation Sans', sans-serif;font-size:15px;color:#000;font-weight:normal;font-style:normal;white-space:pre;word-spacing:-1px;width:121px;overflow:hidden;">2022-11-29 00:00:00</div>
<div style="position:absolute;left:986px;top:497px;height:24px;line-height:24px;font-family:'Liberation Sans', sans-serif;font-size:15px;color:#000;font-weight:normal;font-style:normal;white-space:pre;word-spacing:-1px;width:121px;overflow:hidden;">2022-11-29 00:00:00</div>
<div style="position:absolute;left:986px;top:521px;height:24px;line-height:24px;font-family:'Liberation Sans', sans-serif;font-size:15px;color:#000;font-weight:normal;font-style:normal;white-space:pre;word-spacing:-1px;width:121px;overflow:hidden;">2022-11-29 00:00:00</div>
<div style="position:absolute;left:986px;top:545px;height:24px;line-height:24px;font-family:'Liberation Sans', sans-serif;font-size:15px;color:#000;font-weight:normal;font-style:normal;white-space:pre;word-spacing:-1px;width:121px;overflow:hidden;">2022-11-29 00:00:00</div>
<div style="position:absolute;left:986px;top:569px;height:24px;line-height:24px;font-family:'Liberation Sans', sans-serif;font-size:15px;color:#000;font-weight:normal;font-style:normal;white-space:pre;word-spacing:-1px;width:121px;overflow:hidden;">2022-11-29 00:00:00</div>
<div style="position:absolute;left:986px;top:593px;height:24px;line-height:24px;font-family:'Liberation Sans', sans-serif;font-size:15px;color:#000;font-weight:normal;font-style:normal;white-space:pre;word-spacing:-1px;width:121px;overflow:hidden;">2022-11-29 00:00:00</div>
<div style="position:absolute;left:986px;top:617px;height:24px;line-height:24px;font-family:'Liberation Sans', sans-serif;font-size:15px;color:#000;font-weight:normal;font-style:normal;white-space:pre;word-spacing:-1px;width:121px;overflow:hidden;">2022-11-29 00:00:00</div>
<div style="position:absolute;left:1134px;top:322px;height:31px;line-height:31px;font-family:'Liberation Sans', sans-serif;font-size:15px;color:#000;font-weight:normal;font-style:normal;white-space:pre;letter-spacing:0.039px;">staffno</div>
<div style="position:absolute;left:1114px;top:353px;height:24px;line-height:24px;font-family:'Liberation Sans', sans-serif;font-size:15px;color:#000;font-weight:normal;font-style:normal;white-space:pre;word-spacing:-1px;width:103px;overflow:hidden;">2024-07-04 00:00:00</div>
<div style="position:absolute;left:1114px;top:377px;height:24px;line-height:24px;font-family:'Liberation Sans', sans-serif;font-size:15px;color:#000;font-weight:normal;font-style:normal;white-space:pre;word-spacing:-1px;width:103px;overflow:hidden;">2024-07-04 00:00:00</div>
<div style="position:absolute;left:1114px;top:401px;height:24px;line-height:24px;font-family:'Liberation Sans', sans-serif;font-size:15px;color:#000;font-weight:normal;font-style:normal;white-space:pre;word-spacing:-1px;width:103px;overflow:hidden;">2024-07-04 00:00:00</div>
<div style="position:absolute;left:1114px;top:425px;height:24px;line-height:24px;font-family:'Liberation Sans', sans-serif;font-size:15px;color:#000;font-weight:normal;font-style:normal;white-space:pre;word-spacing:-1px;width:103px;overflow:hidden;">2024-07-04 00:00:00</div>
<div style="position:absolute;left:1114px;top:449px;height:24px;line-height:24px;font-family:'Liberation Sans', sans-serif;font-size:15px;color:#000;font-weight:normal;font-style:normal;white-space:pre;word-spacing:-1px;width:103px;overflow:hidden;">2024-07-04 00:00:00</div>
<div style="position:absolute;left:1114px;top:473px;height:24px;line-height:24px;font-family:'Liberation Sans', sans-serif;font-size:15px;color:#000;font-weight:normal;font-style:normal;white-space:pre;word-spacing:-1px;width:103px;overflow:hidden;">2024-07-04 00:00:00</div>
<div style="position:absolute;left:1114px;top:497px;height:24px;line-height:24px;font-family:'Liberation Sans', sans-serif;font-size:15px;color:#000;font-weight:normal;font-style:normal;white-space:pre;word-spacing:-1px;width:103px;overflow:hidden;">2024-07-04 00:00:00</div>
<div style="position:absolute;left:1114px;top:521px;height:24px;line-height:24px;font-family:'Liberation Sans', sans-serif;font-size:15px;color:#000;font-weight:normal;font-style:normal;white-space:pre;word-spacing:-1px;width:103px;overflow:hidden;">2024-07-04 00:00:00</div>
<div style="position:absolute;left:1114px;top:545px;height:24px;line-height:24px;font-family:'Liberation Sans', sans-serif;font-size:15px;color:#000;font-weight:normal;font-style:normal;white-space:pre;word-spacing:-1px;width:103px;overflow:hidden;">2024-07-04 00:00:00</div>
<div style="position:absolute;left:1114px;top:569px;height:24px;line-height:24px;font-family:'Liberation Sans', sans-serif;font-size:15px;color:#000;font-weight:normal;font-style:normal;white-space:pre;word-spacing:-1px;width:103px;overflow:hidden;">2024-07-04 00:00:00</div>
<div style="position:absolute;left:1114px;top:593px;height:24px;line-height:24px;font-family:'Liberation Sans', sans-serif;font-size:15px;color:#000;font-weight:normal;font-style:normal;white-space:pre;word-spacing:-1px;width:103px;overflow:hidden;">2024-07-04 00:00:00</div>
<div style="position:absolute;left:1114px;top:617px;height:24px;line-height:24px;font-family:'Liberation Sans', sans-serif;font-size:15px;color:#000;font-weight:normal;font-style:normal;white-space:pre;word-spacing:-1px;width:103px;overflow:hidden;">2024-07-04 00:00:00</div>
<div style="position:absolute;left:1244px;top:322px;height:31px;line-height:31px;font-family:'Liberation Sans', sans-serif;font-size:15px;color:#000;font-weight:normal;font-style:normal;white-space:pre;letter-spacing:-0.677px;">area</div>
<div style="position:absolute;left:1224px;top:353px;height:24px;line-height:24px;font-family:'Liberation Sans', sans-serif;font-size:15px;color:#000;font-weight:normal;font-style:normal;white-space:pre;word-spacing:-1px;width:86px;overflow:hidden;">2024-07-05 00:00:00</div>
<div style="position:absolute;left:1224px;top:377px;height:24px;line-height:24px;font-family:'Liberation Sans', sans-serif;font-size:15px;color:#000;font-weight:normal;font-style:normal;white-space:pre;word-spacing:-1px;width:86px;overflow:hidden;">2024-07-05 00:00:00</div>
<div style="position:absolute;left:1224px;top:401px;height:24px;line-height:24px;font-family:'Liberation Sans', sans-serif;font-size:15px;color:#000;font-weight:normal;font-style:normal;white-space:pre;word-spacing:-1px;width:86px;overflow:hidden;">2024-07-05 00:00:00</div>
<div style="position:absolute;left:1224px;top:425px;height:24px;line-height:24px;font-family:'Liberation Sans', sans-serif;font-size:15px;color:#000;font-weight:normal;font-style:normal;white-space:pre;word-spacing:-1px;width:86px;overflow:hidden;">2024-07-05 00:00:00</div>
<div style="position:absolute;left:1224px;top:449px;height:24px;line-height:24px;font-family:'Liberation Sans', sans-serif;font-size:15px;color:#000;font-weight:normal;font-style:normal;white-space:pre;word-spacing:-1px;width:86px;overflow:hidden;">2024-07-05 00:00:00</div>
<div style="position:absolute;left:1224px;top:473px;height:24px;line-height:24px;font-family:'Liberation Sans', sans-serif;font-size:15px;color:#000;font-weight:normal;font-style:normal;white-space:pre;word-spacing:-1px;width:86px;overflow:hidden;">2024-07-05 00:00:00</div>
<div style="position:absolute;left:1224px;top:497px;height:24px;line-height:24px;font-family:'Liberation Sans', sans-serif;font-size:15px;color:#000;font-weight:normal;font-style:normal;white-space:pre;word-spacing:-1px;width:86px;overflow:hidden;">2024-07-05 00:00:00</div>
<div style="position:absolute;left:1224px;top:521px;height:24px;line-height:24px;font-family:'Liberation Sans', sans-serif;font-size:15px;color:#000;font-weight:normal;font-style:normal;white-space:pre;word-spacing:-1px;width:86px;overflow:hidden;">2024-07-05 00:00:00</div>
<div style="position:absolute;left:1224px;top:545px;height:24px;line-height:24px;font-family:'Liberation Sans', sans-serif;font-size:15px;color:#000;font-weight:normal;font-style:normal;white-space:pre;word-spacing:-1px;width:86px;overflow:hidden;">2024-07-05 00:00:00</div>
<div style="position:absolute;left:1224px;top:569px;height:24px;line-height:24px;font-family:'Liberation Sans', sans-serif;font-size:15px;color:#000;font-weight:normal;font-style:normal;white-space:pre;word-spacing:-1px;width:86px;overflow:hidden;">2024-07-05 00:00:00</div>
<div style="position:absolute;left:1224px;top:593px;height:24px;line-height:24px;font-family:'Liberation Sans', sans-serif;font-size:15px;color:#000;font-weight:normal;font-style:normal;white-space:pre;word-spacing:-1px;width:86px;overflow:hidden;">2024-07-05 00:00:00</div>
<div style="position:absolute;left:1224px;top:617px;height:24px;line-height:24px;font-family:'Liberation Sans', sans-serif;font-size:15px;color:#000;font-weight:normal;font-style:normal;white-space:pre;word-spacing:-1px;width:86px;overflow:hidden;">2024-07-05 00:00:00</div>
<div style="position:absolute;left:1337px;top:322px;height:31px;line-height:31px;font-family:'Liberation Sans', sans-serif;font-size:15px;color:#000;font-weight:normal;font-style:normal;white-space:pre;letter-spacing:-1.844px;">bs</div>
<div style="position:absolute;left:1317px;top:353px;height:24px;line-height:24px;font-family:'Liberation Sans', sans-serif;font-size:15px;color:#000;font-weight:normal;font-style:normal;white-space:pre;letter-spacing:-0.384px;width:102px;overflow:hidden;">Zjjt_00009P00009</div>
<div style="position:absolute;left:1317px;top:377px;height:24px;line-height:24px;font-family:'Liberation Sans', sans-serif;font-size:15px;color:#000;font-weight:normal;font-style:normal;white-space:pre;letter-spacing:-0.384px;width:102px;overflow:hidden;">Zjjt_00009P00009</div>
<div style="position:absolute;left:1317px;top:401px;height:24px;line-height:24px;font-family:'Liberation Sans', sans-serif;font-size:15px;color:#000;font-weight:normal;font-style:normal;white-space:pre;letter-spacing:-0.384px;width:102px;overflow:hidden;">Zjjt_00009P00009</div>
<div style="position:absolute;left:1317px;top:425px;height:24px;line-height:24px;font-family:'Liberation Sans', sans-serif;font-size:15px;color:#000;font-weight:normal;font-style:normal;white-space:pre;letter-spacing:-0.384px;width:102px;overflow:hidden;">Zjjt_00009P00009</div>
<div style="position:absolute;left:1317px;top:449px;height:24px;line-height:24px;font-family:'Liberation Sans', sans-serif;font-size:15px;color:#000;font-weight:normal;font-style:normal;white-space:pre;letter-spacing:-0.384px;width:102px;overflow:hidden;">Zjjt_00009P00009</div>
<div style="position:absolute;left:1317px;top:473px;height:24px;line-height:24px;font-family:'Liberation Sans', sans-serif;font-size:15px;color:#000;font-weight:normal;font-style:normal;white-space:pre;letter-spacing:-0.384px;width:102px;overflow:hidden;">Zjjt_00009P00009</div>
<div style="position:absolute;left:1317px;top:497px;height:24px;line-height:24px;font-family:'Liberation Sans', sans-serif;font-size:15px;color:#000;font-weight:normal;font-style:normal;white-space:pre;letter-spacing:-0.384px;width:102px;overflow:hidden;">Zjjt_00009P00009</div>
<div style="position:absolute;left:1317px;top:521px;height:24px;line-height:24px;font-family:'Liberation Sans', sans-serif;font-size:15px;color:#000;font-weight:normal;font-style:normal;white-space:pre;letter-spacing:-0.384px;width:102px;overflow:hidden;">Zjjt_00009P00009</div>
<div style="position:absolute;left:1317px;top:545px;height:24px;line-height:24px;font-family:'Liberation Sans', sans-serif;font-size:15px;color:#000;font-weight:normal;font-style:normal;white-space:pre;letter-spacing:-0.384px;width:102px;overflow:hidden;">Zjjt_00009P00009</div>
<div style="position:absolute;left:1317px;top:569px;height:24px;line-height:24px;font-family:'Liberation Sans', sans-serif;font-size:15px;color:#000;font-weight:normal;font-style:normal;white-space:pre;letter-spacing:-0.384px;width:102px;overflow:hidden;">Zjjt_00009P00009</div>
<div style="position:absolute;left:1317px;top:593px;height:24px;line-height:24px;font-family:'Liberation Sans', sans-serif;font-size:15px;color:#000;font-weight:normal;font-style:normal;white-space:pre;letter-spacing:-0.384px;width:102px;overflow:hidden;">Zjjt_00009P00009</div>
<div style="position:absolute;left:1317px;top:617px;height:24px;line-height:24px;font-family:'Liberation Sans', sans-serif;font-size:15px;color:#000;font-weight:normal;font-style:normal;white-space:pre;letter-spacing:-0.384px;width:102px;overflow:hidden;">Zjjt_00009P00009</div>
<div style="position:absolute;left:354px;top:353px;height:24px;line-height:24px;font-family:'Liberation Sans', sans-serif;font-size:15px;color:#000;font-weight:normal;font-style:normal;white-space:pre;">1</div>
<div style="position:absolute;left:354px;top:377px;height:24px;line-height:24px;font-family:'Liberation Sans', sans-serif;font-size:15px;color:#000;font-weight:normal;font-style:normal;white-space:pre;">2</div>
<div style="position:absolute;left:354px;top:401px;height:24px;line-height:24px;font-family:'Liberation Sans', sans-serif;font-size:15px;color:#000;font-weight:normal;font-style:normal;white-space:pre;">3</div>
<div style="position:absolute;left:354px;top:425px;height:24px;line-height:24px;font-family:'Liberation Sans', sans-serif;font-size:15px;color:#000;font-weight:normal;font-style:normal;white-space:pre;">4</div>
<div style="position:absolute;left:354px;top:449px;height:24px;line-height:24px;font-family:'Liberation Sans', sans-serif;font-size:15px;color:#000;font-weight:normal;font-style:normal;white-space:pre;">5</div>
<div style="position:absolute;left:354px;top:473px;height:24px;line-height:24px;font-family:'Liberation Sans', sans-serif;font-size:15px;color:#000;font-weight:normal;font-style:normal;white-space:pre;">6</div>
<div style="position:absolute;left:354px;top:497px;height:24px;line-height:24px;font-family:'Liberation Sans', sans-serif;font-size:15px;color:#000;font-weight:normal;font-style:normal;white-space:pre;">7</div>
<div style="position:absolute;left:354px;top:521px;height:24px;line-height:24px;font-family:'Liberation Sans', sans-serif;font-size:15px;color:#000;font-weight:normal;font-style:normal;white-space:pre;">8</div>
<div style="position:absolute;left:354px;top:545px;height:24px;line-height:24px;font-family:'Liberation Sans', sans-serif;font-size:15px;color:#000;font-weight:normal;font-style:normal;white-space:pre;">9</div>
<div style="position:absolute;left:354px;top:569px;height:24px;line-height:24px;font-family:'Liberation Sans', sans-serif;font-size:15px;color:#000;font-weight:normal;font-style:normal;white-space:pre;">10</div>
<div style="position:absolute;left:354px;top:593px;height:24px;line-height:24px;font-family:'Liberation Sans', sans-serif;font-size:15px;color:#000;font-weight:normal;font-style:normal;white-space:pre;">11</div>
<div style="position:absolute;left:354px;top:617px;height:24px;line-height:24px;font-family:'Liberation Sans', sans-serif;font-size:15px;color:#000;font-weight:normal;font-style:normal;white-space:pre;">12</div>
<svg style="position:absolute;left:0;top:0" width="1357" height="635" viewBox="0 0 1357 635"><g fill="#1a8dd8">
<path d="M6,10.5 a5,1.8 0 0 1 10,0 v7.5 a5,1.8 0 0 1 -10,0z"/>
</g>
<g stroke="#f2f2f2" stroke-width="1" fill="none"><path d="M6,14 q5,2 10,0 M6,17 q5,2 10,0"/></g>
<g fill="#1a8dd8" stroke="#f2f2f2" stroke-width="1"><path d="M9.5,13.5 a5.5,2 0 0 1 11,0 v7.5 a5.5,2 0 0 1 -11,0z"/></g>
<g stroke="#f2f2f2" stroke-width="1.2" fill="none"><path d="M9.5,14 a5.5,2 0 0 0 11,0 M9.5,17.3 a5.5,2 0 0 0 11,0 M9.5,20.5 a5.5,2 0 0 0 11,0"/></g>
<path d="M108.5,12.5 L117,21 M117,12.5 L108.5,21" stroke="#222" stroke-width="0.95"/>
<path d="M130,9 h11 v1.7 h-9.3 v9.3 h-1.7z" fill="#1a8dd8"/><rect x="134" y="13" width="9.5" height="9.5" fill="#5cc2ef" stroke="#1a8dd8" stroke-width="1.4"/><rect x="133.3" y="12.3" width="10.9" height="2.2" fill="#1a8dd8"/>
<rect x="272.5" y="8.5" width="9" height="3.2" fill="#fff" stroke="#000" stroke-width="1.2"/>
<rect x="295.5" y="8.5" width="9" height="9" fill="#fff" stroke="#000" stroke-width="1.2"/><path d="M295.5,10.5 h9" stroke="#000" stroke-width="1.2"/>
<g fill="#1a8dd8"><rect x="180" y="34" width="2.2" height="4"/><rect x="185" y="34" width="2.2" height="4"/><path d="M178,38 l1,-1 h8.5 l1.5,1.2 v2.3 q-2.5,0.3 -3.8,3 v4.3 h-2.8 v-1.5 q-3,-2.5 -4.4,-5.5z"/></g>
<path d="M188.5,41 v6.8 M185,44.4 h7" stroke="#1aa33a" stroke-width="1.5"/>
<path d="M202,39 h7.5 l-3.75,4.2z" fill="#222"/>
<path d="M218.5,47 v-12.5 h5 l1.5,1.8 h8.5 v5.5 M226,47 h-7.5" fill="none" stroke="#a6a6a6" stroke-width="1.1"/><path d="M230.5,42 v5.5 M227.8,44.8 h5.5" stroke="#a6a6a6" stroke-width="1"/>
<rect x="240" y="32" width="1" height="18" fill="#777"/>
<path d="M251,42.3 h10.5 M253.5,39.6 h10.5" stroke="#1a8dd8" stroke-width="1.8"/>
<path d="M277,38.6 h7" stroke="#1a8dd8" stroke-width="2"/><path d="M283,35.5 l4.5,3.1 l-4.5,3.1z" fill="#1a8dd8"/>
<path d="M276,43.4 h8" stroke="#1e9a3a" stroke-width="2"/><path d="M277.5,40.3 l-4.5,3.1 l4.5,3.1z" fill="#1e9a3a"/>
<g fill="none" stroke="#5a5a5a" stroke-width="1.1"><circle cx="303.4" cy="36.2" r="1.9"/><circle cx="303.4" cy="41.2" r="1.9"/><circle cx="303.4" cy="46.2" r="1.9"/></g>
<path d="M277,58.5 h13 l-5,6 v6.5 l-3,-2 v-4.5z" fill="#5cc2ef" stroke="#1a8dd8" stroke-width="1.3"/><path d="M286,68.5 l2,2 l4,-4" fill="none" stroke="#2aa844" stroke-width="1.1"/>
<path d="M302,63 h7.5 l-3.75,4.2z" fill="#222"/>
<path d="M7.5,87.5 l4.5,4.5 l4.5,-4.5" fill="none" stroke="#404040" stroke-width="1.6"/>
<path d="M29.8,109.5 l4.2,4 l-4.2,4" fill="none" stroke="#8e8e8e" stroke-width="1.75"/>
<path d="M29.8,132.5 l4.2,4 l-4.2,4" fill="none" stroke="#8e8e8e" stroke-width="1.75"/>
<path d="M29.8,155.5 l4.2,4 l-4.2,4" fill="none" stroke="#8e8e8e" stroke-width="1.75"/>
<path d="M27.5,179.5 l4.5,4.5 l4.5,-4.5" fill="none" stroke="#404040" stroke-width="1.6"/>
<path d="M47.5,202.5 l4.5,4.5 l4.5,-4.5" fill="none" stroke="#404040" stroke-width="1.6"/>
<path d="M69.8,224.5 l4.2,4 l-4.2,4" fill="none" stroke="#8e8e8e" stroke-width="1.75"/>
<path d="M69.8,247.5 l4.2,4 l-4.2,4" fill="none" stroke="#8e8e8e" stroke-width="1.75"/>
<path d="M49.8,270.5 l4.2,4 l-4.2,4" fill="none" stroke="#8e8e8e" stroke-width="1.75"/>
<path d="M49.8,293.5 l4.2,4 l-4.2,4" fill="none" stroke="#8e8e8e" stroke-width="1.75"/>
<path d="M49.8,316.5 l4.2,4 l-4.2,4" fill="none" stroke="#8e8e8e" stroke-width="1.75"/>
<path d="M9.8,339.5 l4.2,4 l-4.2,4" fill="none" stroke="#8e8e8e" stroke-width="1.75"/>
<path d="M46.6,105.5 h8 l3,3 v11.2 h-11z" fill="#fff" stroke="#1a8dd8" stroke-width="1.2"/>
<g fill="#1a8dd8"><rect x="48.3" y="108.5" width="2.6" height="1.2"/><rect x="51.8" y="108.0" width="3.4" height="2.2"/><rect x="48.3" y="111.8" width="2.6" height="1.2"/><rect x="51.8" y="111.3" width="3.4" height="2.2"/><rect x="48.3" y="115.1" width="2.6" height="1.2"/><rect x="51.8" y="114.6" width="3.4" height="2.2"/></g>
<path d="M46.6,128.5 h8 l3,3 v11.2 h-11z" fill="#fff" stroke="#1a8dd8" stroke-width="1.2"/>
<g fill="#1a8dd8"><rect x="48.3" y="131.5" width="2.6" height="1.2"/><rect x="51.8" y="131.0" width="3.4" height="2.2"/><rect x="48.3" y="134.8" width="2.6" height="1.2"/><rect x="51.8" y="134.3" width="3.4" height="2.2"/><rect x="48.3" y="138.1" width="2.6" height="1.2"/><rect x="51.8" y="137.6" width="3.4" height="2.2"/></g>
<path d="M46.6,151.5 h8 l3,3 v11.2 h-11z" fill="#fff" stroke="#1a8dd8" stroke-width="1.2"/>
<g fill="#1a8dd8"><rect x="48.3" y="154.5" width="2.6" height="1.2"/><rect x="51.8" y="154.0" width="3.4" height="2.2"/><rect x="48.3" y="157.8" width="2.6" height="1.2"/><rect x="51.8" y="157.3" width="3.4" height="2.2"/><rect x="48.3" y="161.1" width="2.6" height="1.2"/><rect x="51.8" y="160.6" width="3.4" height="2.2"/></g>
<path d="M46.6,174.5 h8 l3,3 v11.2 h-11z" fill="#fff" stroke="#1a8dd8" stroke-width="1.2"/>
<g fill="#1a8dd8"><rect x="48.3" y="177.5" width="2.6" height="1.2"/><rect x="51.8" y="177.0" width="3.4" height="2.2"/><rect x="48.3" y="180.8" width="2.6" height="1.2"/><rect x="51.8" y="180.3" width="3.4" height="2.2"/><rect x="48.3" y="184.1" width="2.6" height="1.2"/><rect x="51.8" y="183.6" width="3.4" height="2.2"/></g>
<g transform="translate(0,0)"><path d="M24.3,85.5 Q24.5,82.3 28,82.3 L33,82.6 Q36.2,83 36,86.5 L35.5,89.5 L33.5,90.5 L33.2,94.8 Q31,95.3 29,94.3 L28.3,90.5 Q24.6,89.5 24.3,85.5 Z" fill="#f4e41c"/><path d="M26,84 q3,-1 6,0.5" stroke="#fff59a" stroke-width="1" fill="none"/><circle cx="30.3" cy="88.3" r="0.8" fill="#222"/><circle cx="31.5" cy="90.4" r="0.8" fill="#222"/></g>
<g transform="translate(0,0)"><rect x="33" y="89" width="7" height="8" fill="#1ea84a"/><rect x="34" y="90" width="5" height="6" fill="#5cb87a"/><path d="M34.4,93.3 l1.6,2 l2.6,-4" fill="none" stroke="#fff" stroke-width="1.2"/></g>
<g transform="translate(0,253)"><path d="M24.3,85.5 Q24.5,82.3 28,82.3 L33,82.6 Q36.2,83 36,86.5 L35.5,89.5 L33.5,90.5 L33.2,94.8 Q31,95.3 29,94.3 L28.3,90.5 Q24.6,89.5 24.3,85.5 Z" fill="#f4e41c"/><path d="M26,84 q3,-1 6,0.5" stroke="#fff59a" stroke-width="1" fill="none"/><circle cx="30.3" cy="88.3" r="0.8" fill="#222"/><circle cx="31.5" cy="90.4" r="0.8" fill="#222"/></g>
<g transform="translate(0,253)"><rect x="33" y="89" width="7" height="8" fill="#d8202a"/><path d="M34.6,90.8 l3.8,4.4 M38.4,90.8 l-3.8,4.4" fill="none" stroke="#fff" stroke-width="1.1"/></g>
<path d="M65,198 h5 l1,1.5 h8 v10.2 h-14z" fill="#f08a1c"/><g fill="#fff"><rect x="66.5" y="202" width="11" height="2.6"/><rect x="66.5" y="205.6" width="11" height="2.6"/></g><rect x="69" y="201" width="1" height="8" fill="#f08a1c"/>
<rect x="85.6" y="221.8" width="12.8" height="9.6" rx="1" fill="#fff" stroke="#1a8dd8" stroke-width="1.2"/><rect x="85.6" y="221.8" width="12.8" height="3.2" fill="#1a8dd8"/><path d="M85.6,227.6 h12.8 M92,222 v9.4" stroke="#1a8dd8" stroke-width="1"/><g fill="#5cc2ef"><rect x="86.6" y="225.2" width="4.8" height="1.9"/><rect x="92.6" y="225.2" width="4.8" height="1.9"/></g>
<rect x="85.6" y="244.8" width="12.8" height="9.6" rx="1" fill="#fff" stroke="#1a8dd8" stroke-width="1.2"/><rect x="85.6" y="244.8" width="12.8" height="3.2" fill="#1a8dd8"/><path d="M85.6,250.6 h12.8 M92,245 v9.4" stroke="#1a8dd8" stroke-width="1"/><g fill="#5cc2ef"><rect x="86.6" y="248.2" width="4.8" height="1.9"/><rect x="92.6" y="248.2" width="4.8" height="1.9"/></g>
<path d="M65,266.5 h5 l1,1.5 h8 v10.5 h-14z" fill="#f08a1c"/><ellipse cx="72" cy="273" rx="4.3" ry="2.6" fill="none" stroke="#fff" stroke-width="1.1"/><circle cx="72" cy="273" r="1.3" fill="#fff"/>
<path d="M65,290 h5.5 l1.5,1.5 h7 v10 h-14z" fill="#f08a1c"/>
<path d="M65,313 h5.5 l1.5,1.5 h7 v10 h-14z" fill="#f08a1c"/>
<path d="M14,631.5 l-4.5,4.5 M301.5,632 l4,4" fill="none" stroke="#555" stroke-width="1.6"/>
<path d="M328.5,10 h11 M329.2,10 v8.5 M337.3,10 v12.2 M326.3,22.2 h11" fill="none" stroke="#1a8dd8" stroke-width="1.6"/>
<path d="M520.5,12.5 L529.5,21.5 M529.5,12.5 L520.5,21.5" stroke="#222" stroke-width="0.95"/>
<path d="M330,38 l6.5,6 l-6.5,6z" fill="#f08a1c"/>
<path d="M330,60.5 l6.5,6 l-6.5,6z" fill="#f08a1c"/><path d="M340,67 v6 M337,70 h6" stroke="#2a9a3a" stroke-width="1.4"/>
<g fill="#f08a1c"><rect x="328" y="81" width="12" height="2.6"/><rect x="328" y="81" width="2.6" height="11"/><rect x="335" y="81" width="2.9" height="14"/><rect x="326" y="92" width="11.5" height="2.6"/><path d="M331.3,84 l3.6,3.3 l-3.6,3.3z"/></g>
<g fill="#9a9a9a"><rect x="329" y="103.5" width="11" height="1.6"/><rect x="328.4" y="104" width="1.6" height="8.5"/><rect x="335.2" y="104" width="1.7" height="12"/><rect x="326" y="115.3" width="10.5" height="1.6"/><rect x="330.8" y="106.2" width="1.6" height="1"/><rect x="333.6" y="106.2" width="1.6" height="1"/><rect x="330.8" y="109.2" width="1.6" height="1"/><rect x="333.6" y="109.2" width="1.6" height="1"/><rect x="330.8" y="112.2" width="1.6" height="1"/><rect x="333.6" y="112.2" width="1.6" height="1"/></g>
<rect x="326.5" y="125" width="13.5" height="12" fill="#fff" stroke="#1a8dd8" stroke-width="1.4"/><rect x="326" y="124.5" width="14.5" height="2.2" fill="#1a8dd8"/><path d="M329,129.5 l2.8,2.2 l-2.8,2.2 M333,134.5 h4" fill="none" stroke="#1a8dd8" stroke-width="1.3"/>
<g transform="translate(333,156)"><circle r="5.3" fill="#1a8dd8"/><rect x="-1.6" y="-7.3" width="3.2" height="3.4" fill="#1a8dd8" transform="rotate(0)"/><rect x="-1.6" y="-7.3" width="3.2" height="3.4" fill="#1a8dd8" transform="rotate(60)"/><rect x="-1.6" y="-7.3" width="3.2" height="3.4" fill="#1a8dd8" transform="rotate(120)"/><rect x="-1.6" y="-7.3" width="3.2" height="3.4" fill="#1a8dd8" transform="rotate(180)"/><rect x="-1.6" y="-7.3" width="3.2" height="3.4" fill="#1a8dd8" transform="rotate(240)"/><rect x="-1.6" y="-7.3" width="3.2" height="3.4" fill="#1a8dd8" transform="rotate(300)"/><circle r="2" fill="#5cc2ef"/></g>
<g fill="#9a9482"><rect x="325" y="176" width="1.5" height="1.5"/><rect x="329" y="176" width="1.5" height="1.5"/><rect x="333" y="176" width="1.5" height="1.5"/><rect x="337" y="176" width="1.5" height="1.5"/></g>
<path d="M326.8,193.5 h8 l3.4,3.4 v10.8 h-11.4z" fill="#fff" stroke="#1a8dd8" stroke-width="1.2"/>
<path d="M330,201 h8 M335.5,198.5 l2.5,2.5 l-2.5,2.5" fill="none" stroke="#1a8dd8" stroke-width="1.1"/>
<path d="M326.8,215.5 h8 l3.4,3.4 v10.8 h-11.4z" fill="#fff" stroke="#1a8dd8" stroke-width="1.2"/>
<rect x="334" y="223" width="6.5" height="7" fill="#e0202a"/><rect x="336.8" y="224" width="1.1" height="3" fill="#fff"/><rect x="336.8" y="228" width="1.1" height="1.1" fill="#fff"/>
<path d="M326.8,237.5 h8 l3.4,3.4 v10.8 h-11.4z" fill="#fff" stroke="#1a8dd8" stroke-width="1.2"/>
<text x="328.2" y="248.5" font-family="Liberation Sans" font-size="6" fill="#1a8dd8">(x)</text>
<path d="M400.5,242.5 l-4.2,4 l4.2,4" fill="none" stroke="#b4b4b4" stroke-width="2"/>
<g stroke="#c8c8c8" stroke-width="1" stroke-dasharray="3,3"><path d="M1070,257.5 h100 M1070,264.5 h100"/></g>
<path d="M1103,263 l6.5,-4 l6.5,4z" fill="#1a8dd8"/><path d="M1124,259 h13 l-6.5,4z" fill="#1a8dd8"/>
<rect x="327" y="271" width="11" height="13" fill="#1a8dd8"/><rect x="327.8" y="272" width="2.2" height="2" fill="#6cc8f0"/><rect x="331" y="272" width="3.2" height="2" fill="#fff"/><rect x="335.2" y="272" width="2" height="2" fill="#fff"/><rect x="327.8" y="275" width="2.2" height="2" fill="#6cc8f0"/><rect x="331" y="275" width="3.2" height="2" fill="#fff"/><rect x="335.2" y="275" width="2" height="2" fill="#fff"/><rect x="327.8" y="278" width="2.2" height="2" fill="#6cc8f0"/><rect x="331" y="278" width="3.2" height="2" fill="#fff"/><rect x="335.2" y="278" width="2" height="2" fill="#fff"/><rect x="327.8" y="281" width="2.2" height="2" fill="#6cc8f0"/><rect x="331" y="281" width="3.2" height="2" fill="#fff"/><rect x="335.2" y="281" width="2" height="2" fill="#fff"/>
<path d="M398.5,273.5 L407.5,282.5 M407.5,273.5 L398.5,282.5" stroke="#222" stroke-width="0.95"/>
<path d="M330.5,304.3 l-2.2,2.2 l2.2,2.2 M333.3,304.3 l2.2,2.2 l-2.2,2.2" fill="none" stroke="#1a8dd8" stroke-width="1.2"/><path d="M334.7,301.8 v-1.3 h8 v1.3 M338.6,300.5 v9.3 M337,309.7 h3.2" fill="none" stroke="#1a8dd8" stroke-width="1.2"/>
<g fill="none" stroke="#6a6a6a" stroke-width="1.7"><path d="M708.5,301.5 v-4 h4 M708.5,297.5 l4,4 M722.5,301.5 v-4 h-4 M722.5,297.5 l-4,4 M708.5,307.5 v4 h4 M708.5,311.5 l4,-4 M722.5,307.5 v4 h-4 M722.5,311.5 l-4,-4"/></g>
<rect x="327" y="368" width="13" height="13" fill="#fff" stroke="#1a8dd8" stroke-width="1.2"/><path d="M327,372.3 h13 M327,376.6 h13 M331.3,368 v13 M335.6,368 v13" stroke="#1a8dd8" stroke-width="1"/>
<path d="M330,438.4 h-1.5 v8.2 h1.5 M328.5,442.4 h9.2 M337.6,441 v3" fill="none" stroke="#1a8dd8" stroke-width="1.2"/><path d="M332.2,447.6 l2.3,-2.2 l2.3,2.2 M332.2,450.6 l2.3,2.2 l2.3,-2.2" fill="none" stroke="#1a8dd8" stroke-width="1.2"/>
<text x="395" y="337.8" font-family="Liberation Sans" font-weight="bold" font-size="9.6" fill="#1a8dd8" stroke="#1a8dd8" stroke-width="0.6" textLength="15.5" lengthAdjust="spacingAndGlyphs">ABC</text>
<path d="M500.5,332 h10.5 l-5.25,5.2z" fill="#1a8dd8"/>
<text x="523" y="337.8" font-family="Liberation Sans" font-weight="bold" font-size="9.6" fill="#1a8dd8" stroke="#1a8dd8" stroke-width="0.6" textLength="15.5" lengthAdjust="spacingAndGlyphs">ABC</text>
<path d="M609.5,332 h10.5 l-5.25,5.2z" fill="#1a8dd8"/>
<text x="632" y="337.8" font-family="Liberation Sans" font-weight="bold" font-size="9.6" fill="#1a8dd8" stroke="#1a8dd8" stroke-width="0.6" textLength="15.5" lengthAdjust="spacingAndGlyphs">ABC</text>
<path d="M747.5,332 h10.5 l-5.25,5.2z" fill="#1a8dd8"/>
<text x="770" y="337.8" font-family="Liberation Sans" font-weight="bold" font-size="9.6" fill="#1a8dd8" stroke="#1a8dd8" stroke-width="0.6" textLength="15.5" lengthAdjust="spacingAndGlyphs">ABC</text>
<path d="M871.5,332 h10.5 l-5.25,5.2z" fill="#1a8dd8"/>
<text x="894" y="337.8" font-family="Liberation Sans" font-weight="bold" font-size="9.6" fill="#1a8dd8" stroke="#1a8dd8" stroke-width="0.6" textLength="15.5" lengthAdjust="spacingAndGlyphs">ABC</text>
<path d="M964.5,332 h10.5 l-5.25,5.2z" fill="#1a8dd8"/>
<text x="987" y="337.8" font-family="Liberation Sans" font-weight="bold" font-size="9.6" fill="#1a8dd8" stroke="#1a8dd8" stroke-width="0.6" textLength="15.5" lengthAdjust="spacingAndGlyphs">ABC</text>
<path d="M1092.5,332 h10.5 l-5.25,5.2z" fill="#1a8dd8"/>
<text x="1115" y="337.8" font-family="Liberation Sans" font-weight="bold" font-size="9.6" fill="#1a8dd8" stroke="#1a8dd8" stroke-width="0.6" textLength="15.5" lengthAdjust="spacingAndGlyphs">ABC</text>
<path d="M1202.5,332 h10.5 l-5.25,5.2z" fill="#1a8dd8"/>
<text x="1225" y="337.8" font-family="Liberation Sans" font-weight="bold" font-size="9.6" fill="#1a8dd8" stroke="#1a8dd8" stroke-width="0.6" textLength="15.5" lengthAdjust="spacingAndGlyphs">ABC</text>
<path d="M1295.5,332 h10.5 l-5.25,5.2z" fill="#1a8dd8"/>
<text x="1318" y="337.8" font-family="Liberation Sans" font-weight="bold" font-size="9.6" fill="#1a8dd8" stroke="#1a8dd8" stroke-width="0.6" textLength="15.5" lengthAdjust="spacingAndGlyphs">ABC</text></svg>
</body></html>
